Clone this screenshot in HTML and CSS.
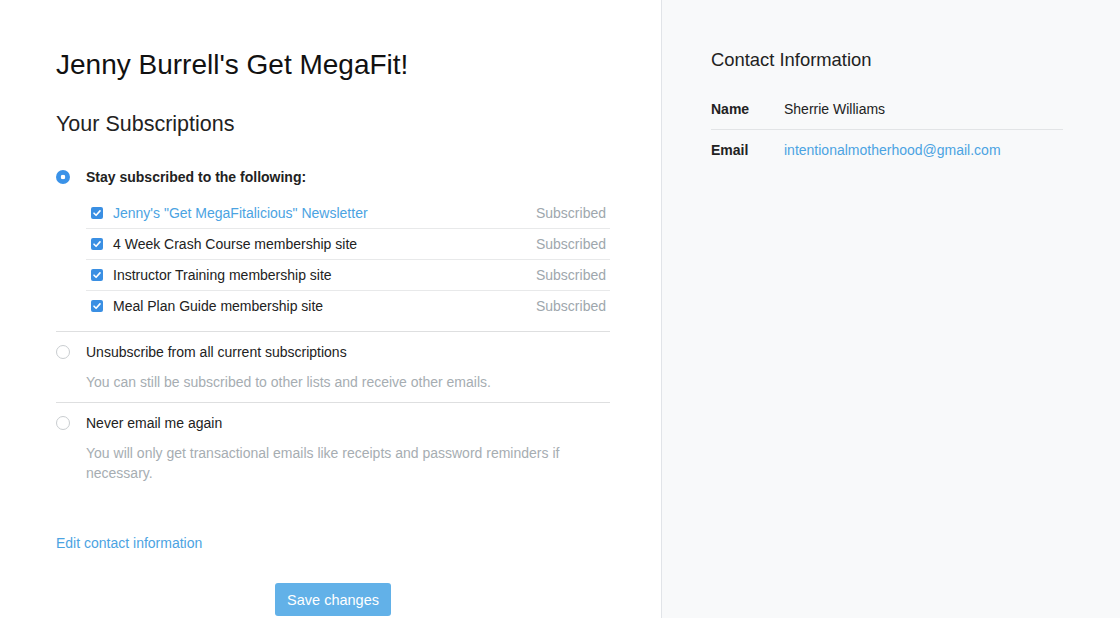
FILE: index.html
```html
<!DOCTYPE html>
<html lang="en">
<head>
    <meta charset="UTF-8">
    <title>Manage Subscriptions</title>
    <link rel="stylesheet" href="styles.css">
</head>
<body>
    <div class="page">
        <div class="main">
            <h1>Jenny Burrell's Get MegaFit!</h1>
            <h2>Your Subscriptions</h2>
            <form class="options" onsubmit="event.preventDefault();">
                <div class="option">
                    <label class="option-label strong">
                        <span class="radio checked"></span>
                        Stay subscribed to the following:
                    </label>
                    <ul class="lists">
                        <li>
                            <span class="check"><svg viewBox="0 0 12 12" width="12" height="12"><path d="M3 6.2 L5.1 8.3 L9 3.9" fill="none" stroke="#fff" stroke-width="1.6" stroke-linecap="round" stroke-linejoin="round"/></svg></span>
                            <span class="list-name link">Jenny's "Get MegaFitalicious" Newsletter</span>
                            <span class="status">Subscribed</span>
                        </li>
                        <li>
                            <span class="check"><svg viewBox="0 0 12 12" width="12" height="12"><path d="M3 6.2 L5.1 8.3 L9 3.9" fill="none" stroke="#fff" stroke-width="1.6" stroke-linecap="round" stroke-linejoin="round"/></svg></span>
                            <span class="list-name">4 Week Crash Course membership site</span>
                            <span class="status">Subscribed</span>
                        </li>
                        <li>
                            <span class="check"><svg viewBox="0 0 12 12" width="12" height="12"><path d="M3 6.2 L5.1 8.3 L9 3.9" fill="none" stroke="#fff" stroke-width="1.6" stroke-linecap="round" stroke-linejoin="round"/></svg></span>
                            <span class="list-name">Instructor Training membership site</span>
                            <span class="status">Subscribed</span>
                        </li>
                        <li>
                            <span class="check"><svg viewBox="0 0 12 12" width="12" height="12"><path d="M3 6.2 L5.1 8.3 L9 3.9" fill="none" stroke="#fff" stroke-width="1.6" stroke-linecap="round" stroke-linejoin="round"/></svg></span>
                            <span class="list-name">Meal Plan Guide membership site</span>
                            <span class="status">Subscribed</span>
                        </li>
                    </ul>
                </div>
                <div class="option">
                    <label class="option-label">
                        <span class="radio"></span>
                        Unsubscribe from all current subscriptions
                    </label>
                    <p class="hint">You can still be subscribed to other lists and receive other emails.</p>
                </div>
                <div class="option last">
                    <label class="option-label">
                        <span class="radio"></span>
                        Never email me again
                    </label>
                    <p class="hint">You will only get transactional emails like receipts and password reminders if necessary.</p>
                </div>
                <a class="edit-link" href="#">Edit contact information</a>
                <div class="actions">
                    <button type="submit">Save changes</button>
                </div>
            </form>
        </div>
        <div class="side">
            <h3>Contact Information</h3>
            <div class="contact-row">
                <span class="contact-label">Name</span>
                <span>Sherrie Williams</span>
            </div>
            <div class="contact-row">
                <span class="contact-label">Email</span>
                <a class="link" href="#">intentionalmotherhood@gmail.com</a>
            </div>
        </div>
    </div>
</body>
</html>
```

FILE: styles.css
```css
body {
    font-family: 'Liberation Sans', Arial, Helvetica, sans-serif;
    font-size: 14px;
    color: #222;
    background-color: #fff;
    margin: 0;
}
.page {
    display: flex;
    height: 618px;
    overflow: hidden;
}
.main {
    width: 554px;
    padding: 48px 51px 0 56px;
}
.side {
    flex: 1;
    background-color: #f8f9fa;
    border-left: 1px solid #e1e4e8;
    padding: 48px 57px 0 49px;
}
h1 {
    font-size: 28px;
    font-weight: normal;
    line-height: 34px;
    margin: 0 0 28px;
    color: #111;
}
h2 {
    font-size: 21.5px;
    font-weight: normal;
    line-height: 28px;
    margin: 0 0 29px;
    color: #222;
}
h3 {
    font-size: 18.4px;
    font-weight: normal;
    line-height: 24px;
    margin: 0 0 17px;
    color: #222;
}
.option {
    padding: 10px 0;
    border-bottom: 1px solid #dedfe0;
}
.option:first-child {
    padding-top: 0;
}
.option.last {
    border-bottom: none;
}
.option-label {
    display: flex;
    align-items: center;
    line-height: 20px;
}
.option-label.strong {
    font-weight: bold;
}
.radio {
    width: 12px;
    height: 12px;
    border: 1px solid #c9cdd0;
    border-radius: 50%;
    margin: 0 16px 0 0;
    background-color: #fff;
    box-sizing: content-box;
}
.radio.checked {
    width: 14px;
    height: 14px;
    border: none;
    background: radial-gradient(circle, #fff 0, #fff 2px, #3a92e8 2.6px);
}
.lists {
    list-style: none;
    margin: 11px 0 0 30px;
    padding: 0;
}
.lists li {
    display: flex;
    align-items: center;
    height: 30px;
    border-bottom: 1px solid #e8e9ea;
}
.lists li:last-child {
    border-bottom: none;
}
.check {
    width: 12px;
    height: 12px;
    border-radius: 2px;
    background-color: #3a8fe3;
    margin: 0 10px 0 5px;
    display: flex;
}
.list-name {
    flex: 1;
}
.link {
    color: #4ba3e2;
    text-decoration: none;
}
.status {
    color: #9ea7ad;
    margin-right: 4px;
}
.hint {
    margin: 10px 0 0 30px;
    line-height: 20px;
    color: #a6adb2;
}
.edit-link {
    display: block;
    margin-top: 40px;
    line-height: 20px;
    color: #4ba3e2;
    text-decoration: none;
}
.actions {
    display: flex;
    justify-content: center;
    margin-top: 30px;
}
button {
    font-family: inherit;
    font-size: 14.5px;
    color: #fff;
    background-color: #62b1e8;
    border: none;
    border-radius: 3px;
    height: 33px;
    padding: 0 12px;
    cursor: pointer;
}
.contact-row {
    display: flex;
    line-height: 20px;
    padding: 10px 0;
    border-bottom: 1px solid #e2e4e6;
}
.contact-row:last-child {
    border-bottom: none;
}
.contact-label {
    width: 73px;
    font-weight: bold;
}
```
